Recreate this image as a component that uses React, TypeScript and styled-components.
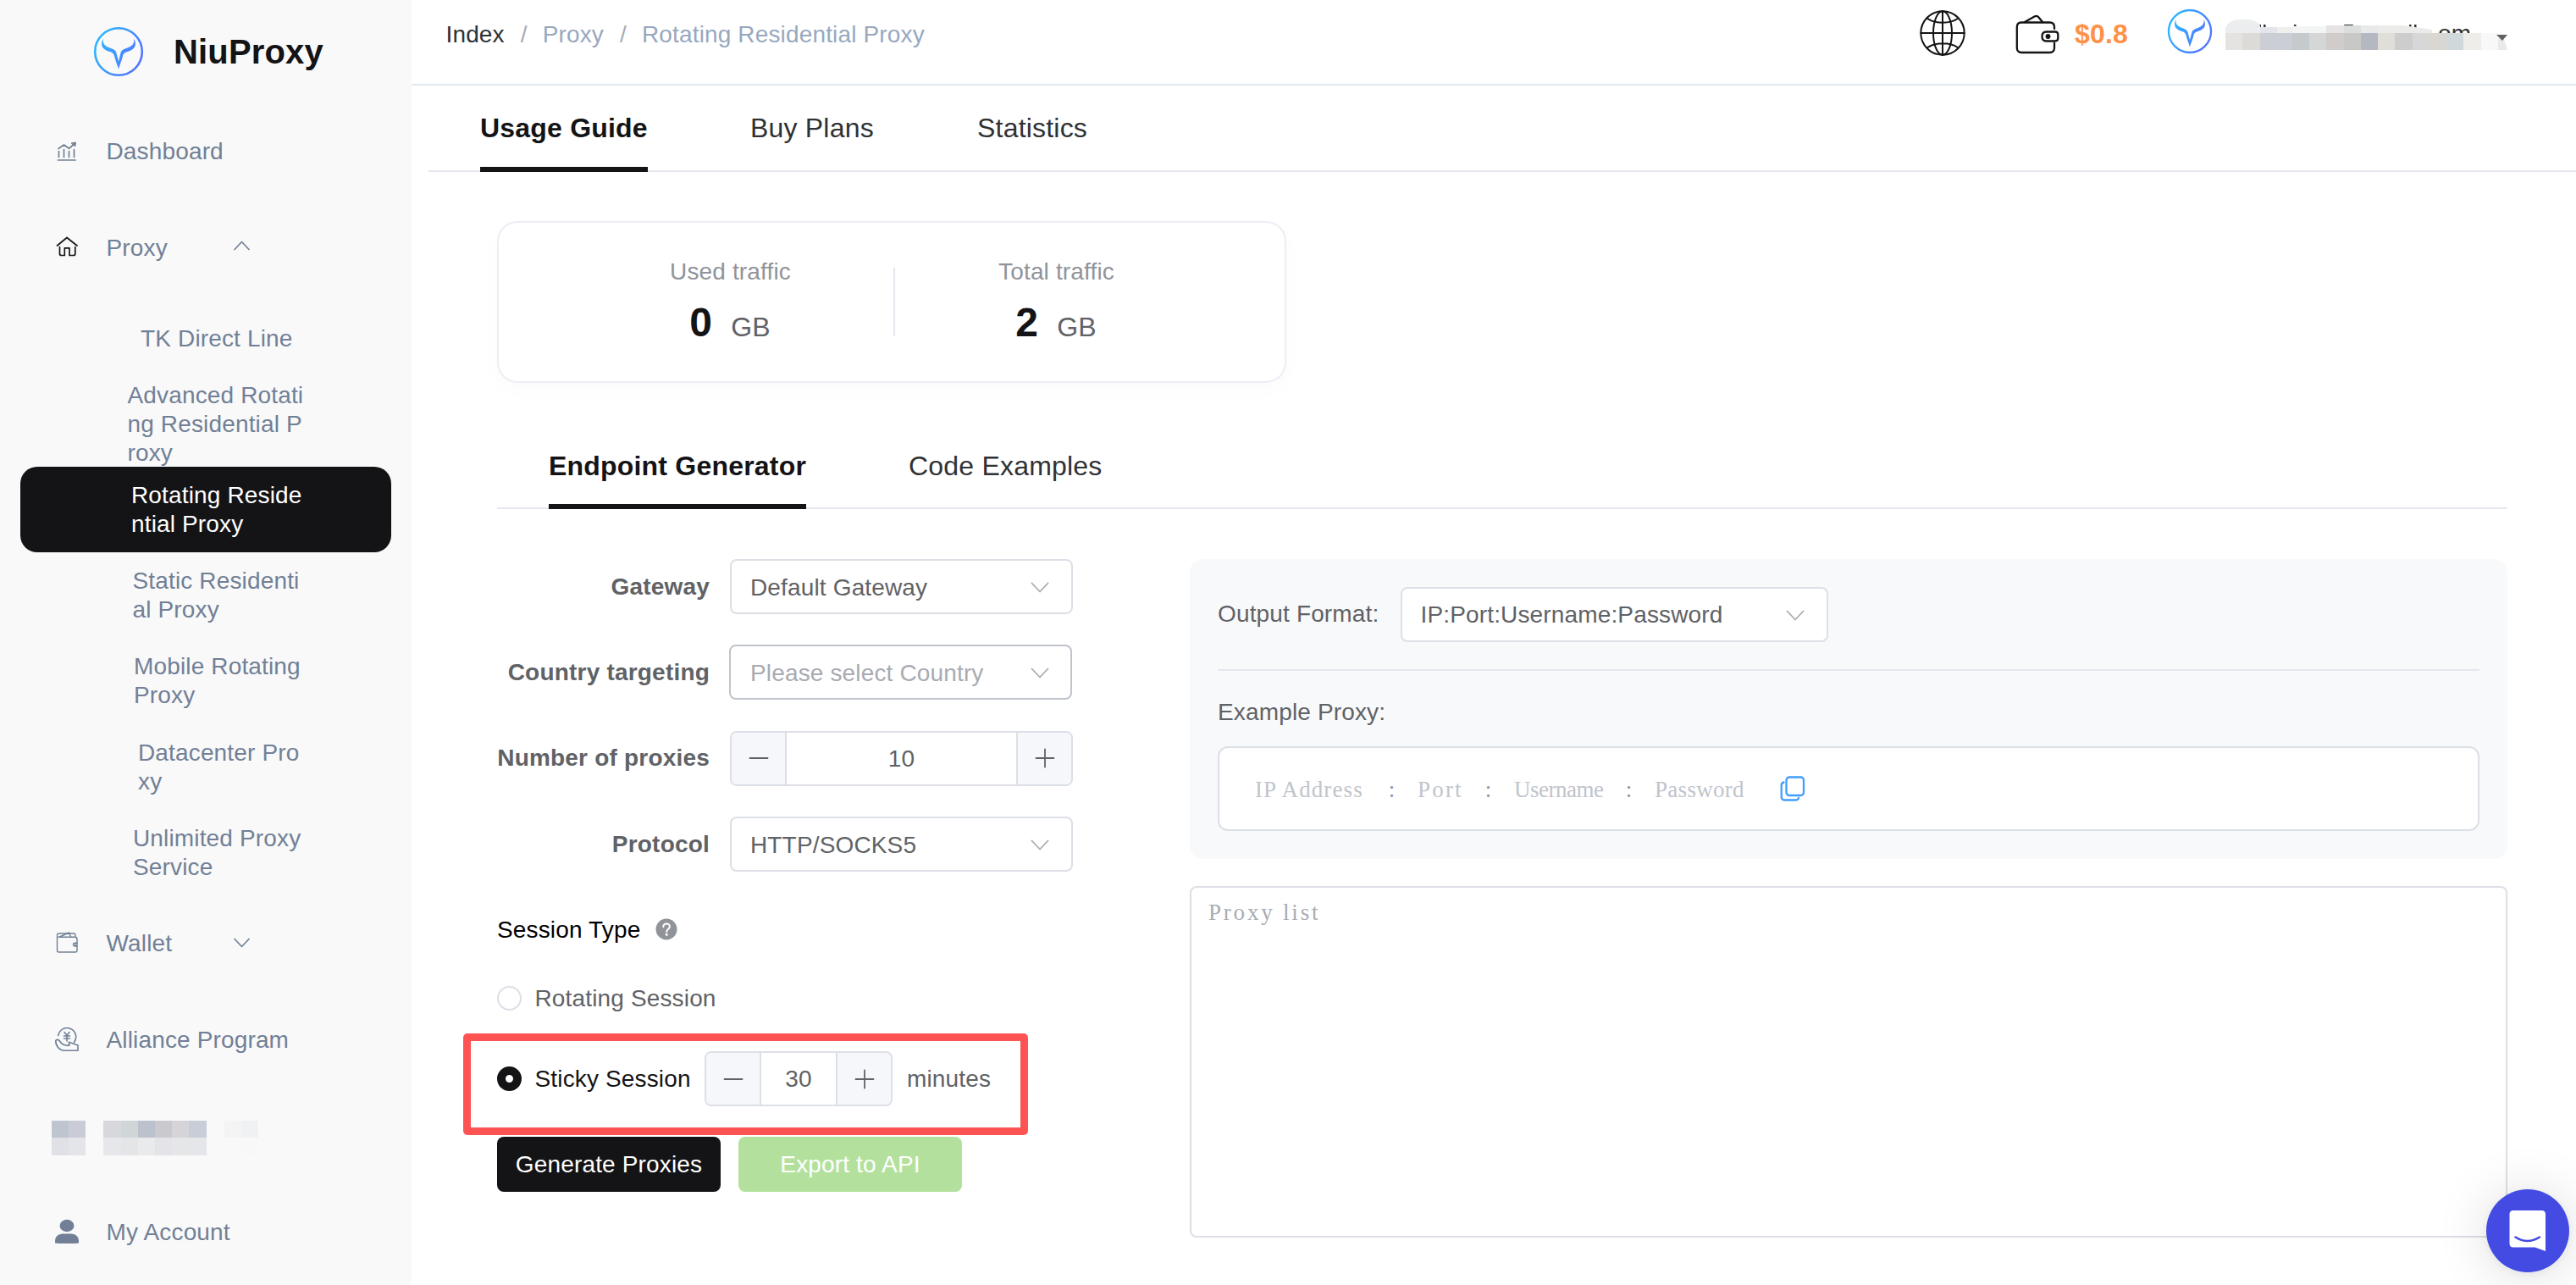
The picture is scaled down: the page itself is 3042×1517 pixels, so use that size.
import React from "react";
import styled, { createGlobalStyle, css } from "styled-components";

const GlobalStyle = createGlobalStyle`
  * { box-sizing: border-box; }
  body {
    margin: 0;
    background: #fff;
    font-family: "Liberation Sans", Arial, sans-serif;
    font-size: 28px;
    line-height: 34px;
    letter-spacing: 0.15px;
    color: #303133;
  }
`;

/* ---------- shell ---------- */

const Page = styled.div`
  display: flex;
  width: 3042px;
  height: 1517px;
  overflow: hidden;
  background: #fff;
`;

const Sidebar = styled.aside`
  flex: none;
  width: 486px;
  background: #f9f9f9;
`;

const Main = styled.main`
  flex: 1;
  min-width: 0;
  display: flex;
  flex-direction: column;
`;

/* ---------- sidebar ---------- */

const Brand = styled.div`
  display: flex;
  align-items: center;
  height: 121.5px;
  padding-left: 110px;
`;

const BrandName = styled.span`
  margin-left: 35px;
  font-size: 40px;
  line-height: 48px;
  font-weight: 700;
  color: #141416;
`;

const NavRow = styled.div`
  display: flex;
  align-items: center;
  height: 113.65px;
  padding-left: 64px;
  color: #718096;
`;

const NavIcon = styled.span`
  display: flex;
  width: 30px;
  height: 30px;
`;

const NavLabel = styled.span`
  margin-left: 31.5px;
  padding-top: 2px;
  width: 150px;
  white-space: nowrap;
`;

const NavArrow = styled.span`
  display: flex;
  margin-bottom: 3px;
`;

const SubList = styled.div`
  display: flex;
  flex-direction: column;
`;

const SubItem = styled.div<{ $indent: number; $active?: boolean }>`
  display: flex;
  flex-direction: column;
  justify-content: center;
  height: 101.1px;
  margin: 0 24px;
  padding-top: 1.5px;
  padding-left: ${(p) => p.$indent}px;
  border-radius: 20px;
  white-space: nowrap;
  color: #718096;
  ${(p) =>
    p.$active &&
    css`
      background: #141416;
      color: #fff;
    `}
`;

const MosaicRow = styled.div`
  display: flex;
  align-items: center;
  gap: 21px;
  height: 113.65px;
  padding: 5px 0 0 61px;
`;

const Mosaic = styled.div<{ $cols: number }>`
  display: grid;
  grid-template-columns: repeat(${(p) => p.$cols}, 20.2px);
  grid-auto-rows: 20.5px;
`;

const Cell = styled.i<{ $c: string }>`
  background: ${(p) => p.$c};
`;

/* ---------- header ---------- */

const Header = styled.header`
  display: flex;
  align-items: center;
  flex: none;
  height: 101px;
  padding: 0 78px 18px 40.5px;
  border-bottom: 2px solid #e2e8f0;
`;

const Crumb = styled.span<{ $current?: boolean }>`
  color: ${(p) => (p.$current ? "#303133" : "#97a8be")};
`;

const Slash = styled.span`
  margin: 0 18px 0 19px;
  color: #a8abb2;
`;

const HeaderRight = styled.div`
  display: flex;
  align-items: center;
  margin-left: auto;
`;

const GlobeBox = styled.span`
  display: flex;
  margin-bottom: 4px;
`;

const WalletBox = styled.span`
  display: flex;
  margin-left: 59px;
`;

const Balance = styled.span`
  width: 62px;
  margin: 0 47px 0 18px;
  font-size: 32px;
  line-height: 36px;
  padding-bottom: 2px;
  font-weight: 700;
  color: #ff9147;
`;

const Account = styled.div`
  display: flex;
  align-items: center;
  gap: 13px;
  margin-bottom: 8px;
`;

/* ---------- tabs ---------- */

const Tabs = styled.nav<{ $h: number }>`
  display: flex;
  flex: none;
  gap: 121px;
  height: ${(p) => p.$h}px;
  padding-left: 61px;
  box-shadow: inset 0 -2px 0 #e4e7ed;
`;

const PageTabs = styled(Tabs)`
  margin-left: 20px;
`;

const PanelTabs = styled(Tabs)`
  margin-top: 50px;
`;

const Tab = styled.div<{ $active?: boolean; $w: number }>`
  display: flex;
  align-items: center;
  width: ${(p) => p.$w}px;
  padding-top: 3px;
  border-bottom: 6px solid ${(p) => (p.$active ? "#141416" : "transparent")};
  font-size: 32px;
  letter-spacing: 0.2px;
  font-weight: ${(p) => (p.$active ? 700 : 400)};
  color: ${(p) => (p.$active ? "#141416" : "#303133")};
  white-space: nowrap;
`;

/* ---------- content ---------- */

const Content = styled.section`
  padding: 58px 81px 0 101px;
`;

const TrafficCard = styled.div`
  display: flex;
  width: 932px;
  height: 191px;
  padding-left: 83px;
  border: 2px solid #ebeef5;
  border-radius: 24px;
  box-shadow: 0 8px 24px rgba(0, 0, 0, 0.02);
`;

const Traffic = styled.div`
  display: flex;
  flex-direction: column;
  align-items: center;
  width: 383px;
  padding-top: 41px;
`;

const TrafficLabel = styled.div`
  margin-right: 2px;
  color: #909399;
`;

const TrafficValue = styled.div`
  display: flex;
  align-items: baseline;
  gap: 22px;
  margin: 15px 3px 0 0;
  font-size: 48px;
  line-height: 56px;
  font-weight: 700;
  color: #141416;
`;

const Unit = styled.span`
  font-size: 32px;
  font-weight: 400;
  color: #606266;
`;

const Divider = styled.div`
  width: 2px;
  height: 81px;
  margin-top: 53px;
  background: #e4e7ed;
`;

const Columns = styled.div`
  display: flex;
  gap: 138px;
  margin-top: 59px;
`;

const Form = styled.div`
  flex: none;
  width: 680px;
`;

const Fields = styled.div`
  display: flex;
  flex-direction: column;
  gap: 36.4px;
`;

const Field = styled.div`
  display: flex;
  align-items: center;
  height: 65px;
`;

const FieldLabel = styled.label`
  width: 251px;
  margin-right: 24px;
  text-align: right;
  font-weight: 700;
  letter-spacing: 0.2px;
  color: #606266;
  white-space: nowrap;
`;

const Select = styled.div<{ $w: number; $hover?: boolean; $empty?: boolean }>`
  display: flex;
  align-items: center;
  justify-content: space-between;
  width: ${(p) => p.$w}px;
  height: 65px;
  margin-left: ${(p) => (p.$hover ? -1 : 0)}px;
  padding: 2px ${(p) => (p.$hover ? 25 : 26)}px 0 ${(p) => (p.$hover ? 23 : 22)}px;
  border: 2px solid ${(p) => (p.$hover ? "#c0c4cc" : "#dcdfe6")};
  border-radius: 8px;
  background: #fff;
  color: ${(p) => (p.$empty ? "#a8abb2" : "#606266")};
  white-space: nowrap;
`;

const Stepper = styled.div<{ $w: number }>`
  display: flex;
  width: ${(p) => p.$w}px;
  height: 65px;
  border: 2px solid #dcdfe6;
  border-radius: 8px;
  overflow: hidden;
  color: #606266;
`;

const StepButton = styled.div<{ $side: "left" | "right" }>`
  display: flex;
  flex: none;
  align-items: center;
  justify-content: center;
  width: 65px;
  background: #f5f7fa;
  border-${(p) => (p.$side === "left" ? "right" : "left")}: 2px solid #dcdfe6;
`;

const StepValue = styled.div`
  flex: 1;
  display: flex;
  align-items: center;
  justify-content: center;
  padding-top: 1px;
`;

const SessionTitle = styled.div`
  display: flex;
  align-items: center;
  height: 40px;
  margin-top: 48px;
  color: #000;
`;

const SessionName = styled.span`
  width: 187px;
  padding-top: 1px;
`;

const RadioRow = styled.div`
  display: flex;
  align-items: center;
  height: 40px;
  margin-top: 41.5px;
  color: #606266;
`;

const StickyRow = styled(RadioRow)`
  position: relative;
  height: 65px;
  margin-top: 42.5px;
`;

const Radio = styled.span<{ $on?: boolean }>`
  flex: none;
  width: 29px;
  height: 29px;
  margin-right: 15.5px;
  border-radius: 50%;
  border: ${(p) => (p.$on ? "10.5px solid #141416" : "2px solid #dcdfe6")};
  background: #fff;
`;

const RadioLabel = styled.span<{ $on?: boolean }>`
  width: 200.5px;
  color: ${(p) => (p.$on ? "#141416" : "#606266")};
  white-space: nowrap;
`;

const Minutes = styled.span`
  margin-left: 17px;
`;

const Highlight = styled.div`
  position: absolute;
  left: -40px;
  top: -21.5px;
  width: 667px;
  height: 120px;
  border: 9px solid #fd5353;
  border-radius: 5px;
`;

const Actions = styled.div`
  display: flex;
  gap: 21px;
  margin-top: 36px;
`;

const Button = styled.div<{ $bg: string }>`
  display: flex;
  align-items: center;
  justify-content: center;
  width: 264px;
  height: 65px;
  padding-top: 1.5px;
  border-radius: 8px;
  background: ${(p) => p.$bg};
  color: #fff;
  white-space: nowrap;
`;

const Output = styled.div`
  flex: 1;
  min-width: 0;
`;

const OutputPanel = styled.div`
  height: 354px;
  padding: 33px;
  border-radius: 16px;
  background: #f8f9fb;
  color: #606266;
`;

const FormatRow = styled.div`
  display: flex;
  align-items: center;
  height: 64px;
`;

const FormatLabel = styled.span`
  width: 215.5px;
`;

const Rule = styled.div`
  height: 2px;
  margin: 33px 0 32px;
  background: #e4e7ed;
`;

const Example = styled.div`
  display: flex;
  align-items: center;
  height: 100px;
  margin-top: 23px;
  padding-left: 42px;
  border: 2px solid #dcdfe6;
  border-radius: 12px;
  background: #fff;
  font-family: "Liberation Serif", "Times New Roman", serif;
  font-size: 27px;
`;

const Part = styled.span<{ $w: number; $track: number }>`
  width: ${(p) => p.$w}px;
  padding-top: 2px;
  letter-spacing: ${(p) => p.$track}px;
  color: #c0c4cc;
  white-space: nowrap;
`;

const Colon = styled.span`
  width: 62px;
  padding: 2px 0 0 1px;
  text-align: center;
  color: #909399;
`;

const CopyBox = styled.span`
  display: flex;
  margin-left: 44px;
`;

const ProxyList = styled.div`
  height: 415px;
  margin-top: 32px;
  padding: 12px 20px;
  border: 2px solid #dcdfe6;
  border-radius: 8px;
  font-family: "Liberation Serif", "Times New Roman", serif;
  font-size: 27px;
  letter-spacing: 2.8px;
  color: #a8abb2;
`;

const Chat = styled.div`
  position: fixed;
  left: 2936px;
  top: 1404px;
  display: flex;
  align-items: center;
  justify-content: center;
  width: 98px;
  height: 98px;
  border-radius: 50%;
  background: #444be3;
  box-shadow: 0 2px 12px rgba(0, 0, 0, 0.06), 0 4px 64px rgba(0, 0, 0, 0.14);
`;

/* ---------- drawings ---------- */

const Logo = ({ size, id }: { size: number; id: string }) => (
  <svg width={size} height={size} viewBox="-30 -30 60 60" fill="none">
    <defs>
      <linearGradient id={id} gradientUnits="userSpaceOnUse" x1="-27" y1="-12" x2="27" y2="14">
        <stop offset="0" stopColor="#2db7ff" />
        <stop offset="1" stopColor="#5470ff" />
      </linearGradient>
    </defs>
    <circle r="27.8" stroke={`url(#${id})`} strokeWidth="2.6" />
    <path
      fill={`url(#${id})`}
      d="M-18.3 -15.5C-22 -8 -19.5 -2.5 -10.5 0C-7 1 -5.6 2.5 -5 5C-4 10 -1.6 15 0 20.5C1.6 15 4 10 5 5C5.6 2.5 7 1 10.5 0C19.5 -2.5 22 -8 18.3 -15.5C18.8 -9.5 16.5 -6.8 10.5 -4.5C5.5 -2.8 3.2 -1.8 2.3 2.5L0 11.5L-2.3 2.5C-3.2 -1.8 -5.5 -2.8 -10.5 -4.5C-16.5 -6.8 -18.8 -9.5 -18.3 -15.5Z"
    />
  </svg>
);

const line = (w: number) => ({
  fill: "none",
  stroke: "currentColor",
  strokeWidth: w,
  strokeLinecap: "round" as const,
  strokeLinejoin: "round" as const,
});

const ChartIcon = () => (
  <svg width="30" height="30" {...line(1.7)}>
    <path d="M4.5 26H25M5.5 15.5V22.5M11.5 13.5V22.5M17.5 15.5V22.5M23.5 13.5V22.5" />
    <path d="M5 12.5L11.5 8L17.5 12.3L23.5 7" />
    <path d="M20.500 6L25.5 5L24.8 9.500Z" fill="currentColor" strokeWidth="1" />
  </svg>
);

const HomeIcon = () => (
  <svg width="30" height="30" color="#141416" {...line(1.7)}>
    <path d="M3.5 13L15 3.5L27 13" />
    <path d="M6.5 14.5V22.5Q6.5 24.5 8.5 24.5H12.3V15.8H18V24.5H22.8Q24.8 24.5 24.8 22.5V14.5" />
  </svg>
);

const NavWalletIcon = () => (
  <svg width="30" height="30" {...line(1.4)}>
    <path d="M5 8.300H24.500Q27 8.300 27 10.500V24Q27 26 25 26H5.500Q3.500 26 3.500 24V6Q3.500 4 5.500 4H23.500Q25 4 25 6V8.300" />
    <path d="M6.500 8L17.500 3L19.500 8M27 15.200H24.500Q22.500 15.200 22.500 17Q22.500 19 24.500 19H27M25 16V18" />
  </svg>
);

const AllianceIcon = () => (
  <svg width="30" height="30" {...line(1.6)}>
    <path d="M4.800 10.500A10.500 10.500 0 1 1 23.500 18.500" />
    <path d="M12 6.500L15 10.300L18 6.500M15 10.300V17M11.500 11H18.500M11.500 14H18.500" />
    <path d="M1.800 16.500C3 14.600 5.500 15.300 6.500 17C8.500 20.500 12 22.600 17.800 22.300C18.200 20 16.500 19 17.500 18.200L28 22V28.300H12C6 28 1.500 22.500 1.800 16.500Z" />
  </svg>
);

const UserIcon = () => (
  <svg width="30" height="30" fill="currentColor">
    <ellipse cx="15" cy="8" rx="8.500" ry="7.200" />
    <path d="M1 28.500V26C1 21 5 17.500 10 17.500H20C25 17.500 29 21 29 26V28.500Q26 29 15 29Q4 29 1 28.500Z" />
  </svg>
);

const Arrow = ({ up }: { up?: boolean }) => (
  <svg width="19" height="12" {...line(1.7)}>
    <path d={up ? "M1 10.500L9.500 1.500L18 10.500" : "M1 1.500L9.500 10.500L18 1.500"} />
  </svg>
);

const SelectArrow = () => (
  <svg width="22" height="13" {...line(1.8)} stroke="#a8abb2">
    <path d="M1.500 1.500L11 11.500L20.500 1.500" />
  </svg>
);

const Minus = () => (
  <svg width="24" height="24" {...line(1.8)}>
    <path d="M1.500 12H22.500" />
  </svg>
);

const Plus = () => (
  <svg width="24" height="24" {...line(1.8)}>
    <path d="M1.500 12H22.500M12 1.500V22.500" />
  </svg>
);

const Globe = () => (
  <svg width="54" height="54" viewBox="-27 -27 54 54" color="#141416" {...line(2)}>
    <circle r="25.700" />
    <ellipse rx="11" ry="25.700" />
    <path d="M0 -25.700V25.700M-25.700 0H25.700M-18.500 -17.500C-9 -10.500 9 -10.500 18.500 -17.500M-18.500 17.500C-9 10.500 9 10.500 18.500 17.500" />
  </svg>
);

const HeaderWallet = () => (
  <svg width="52" height="48" color="#141416" {...line(2.3)}>
    <path d="M46 17V15Q46 9.500 40.500 9.500H7Q1.800 9.500 1.800 15V39.500Q1.800 45 7.300 45H40.500Q46 45 46 39.500V34" />
    <path d="M11 9L22.500 2.500Q25.500 1 27.500 3.500L32 9" />
    <path d="M36.500 20.500H47Q50.300 20.500 50.300 24V28Q50.300 31.500 47 31.500H36.500Q31.500 31.500 31.500 26Q31.500 20.500 36.500 20.500Z" />
    <circle cx="38.500" cy="26" r="1.800" fill="currentColor" />
  </svg>
);

const Question = () => (
  <svg width="26" height="26" viewBox="0 0 26 26">
    <circle cx="13" cy="13" r="12.500" fill="#909399" />
    <path d="M9.300 10.300C9.300 5.200 16.900 5.300 16.900 10C16.900 12.800 13.200 12.800 13.200 16" fill="none" stroke="#fff" strokeWidth="2" strokeLinecap="round" />
    <circle cx="13.200" cy="19.300" r="1.500" fill="#fff" />
  </svg>
);

const Copy = () => (
  <svg width="30" height="30" fill="none" stroke="#409eff" strokeWidth="2.3">
    <rect x="7.500" y="1.500" width="20.500" height="21.500" rx="3.500" />
    <path d="M4.500 7.500Q1.700 8 1.700 11.500V24.500Q1.700 28.500 5.500 28.500H18Q21.500 28.500 22 26" strokeLinecap="round" />
  </svg>
);

const ChatGlyph = () => (
  <svg width="44" height="50" viewBox="0 0 44 50">
    <path d="M5 1H38.500Q43 1 43 5.500V49L30.500 44.500H5Q0.500 44.500 0.500 40V5.500Q0.500 1 5 1Z" fill="#fff" />
    <path d="M7.500 32.500Q21.500 41.500 36 32.500" fill="none" stroke="#444be3" strokeWidth="2.600" strokeLinecap="round" />
  </svg>
);

const maskedCells: [number, number, string][] = [
  [2, 20, "#e4e3e2"], [22, 21, "#dddbd8"], [43, 38, "#cbced4"], [81, 20, "#c5cacd"],
  [101, 20, "#d5d7d6"], [121, 21, "#d1ccca"], [142, 20, "#c8c9c6"], [162, 20, "#b3b8c1"],
  [182, 20, "#dfded9"], [202, 21, "#cdcdce"], [223, 19, "#d7d7d8"], [242, 21, "#dad7d3"],
  [263, 20, "#d1d8dc"], [283, 21, "#efede9"], [304, 20, "#f8f8f8"],
];

const MaskedAccount = () => (
  <svg width="338" height="60" viewBox="0 0 338 60">
    <g fill="#303133">
      <rect x="41" y="22" width="3" height="4" />
      <rect x="47" y="22" width="2.500" height="4" />
      <rect x="83" y="22" width="2.500" height="4" />
      <rect x="142" y="22" width="11" height="2" rx="1" />
      <rect x="219" y="22" width="2.500" height="4" />
      <rect x="225" y="22" width="2.500" height="5" />
    </g>
    <text x="253" y="42" fontSize="28" fontFamily="Liberation Sans, Arial, sans-serif" fill="#303133">om</text>
    <path d="M2 32V25Q8 16 18 16H30Q38 17 43 23V32Z" fill="#ecedee" />
    <rect x="43" y="25" width="20" height="7" fill="#e2e6ea" />
    <rect x="63" y="25" width="18" height="7" fill="#efefee" />
    <rect x="81" y="24" width="40" height="8" fill="#f3f4f4" />
    <rect x="121" y="23" width="21" height="9" fill="#e5e4e3" />
    <rect x="142" y="23" width="20" height="9" fill="#dcdddd" />
    <rect x="162" y="23" width="20" height="9" fill="#e8eaea" />
    <path d="M182 23H212L246 28V32H182Z" fill="#ebebea" />
    {maskedCells.map(([x, w, c]) => (
      <rect key={x} x={x} y="32" width={w} height="20" fill={c} />
    ))}
    <path d="M324 38L331 39L335 52H324Z" fill="#e9e9e9" />
    <path d="M322 34H335L329 41Z" fill="#606266" />
  </svg>
);

/* ---------- data ---------- */

const proxyItems: { lines: string[]; indent: number; active?: boolean }[] = [
  { lines: ["TK Direct Line"], indent: 142 },
  { lines: ["Advanced Rotati", "ng Residential P", "roxy"], indent: 126.5 },
  { lines: ["Rotating Reside", "ntial Proxy"], indent: 131, active: true },
  { lines: ["Static Residenti", "al Proxy"], indent: 132.5 },
  { lines: ["Mobile Rotating", "Proxy"], indent: 134 },
  { lines: ["Datacenter Pro", "xy"], indent: 139 },
  { lines: ["Unlimited Proxy", "Service"], indent: 133 },
];

const mosaics = [
  ["#bfc5cf", "#c9ccd7", "#dfe1e7", "#e4e5e9"],
  ["#d7d8dc", "#d0d5d8", "#bcc1ce", "#cacace", "#d5d5d9", "#c8ced8", "#e6e7eb", "#e4e5e7", "#e9eaeb", "#e4e3e7", "#e5e6e8", "#e5e6ea"],
  ["#f4f4f4", "#f0f1f3", "#f9f9f9", "#f8f8f9"],
];

export default function App() {
  return (
    <Page>
      <GlobalStyle />
      <Sidebar>
        <Brand>
          <Logo size={60} id="brand" />
          <BrandName>NiuProxy</BrandName>
        </Brand>
        <NavRow>
          <NavIcon><ChartIcon /></NavIcon>
          <NavLabel>Dashboard</NavLabel>
        </NavRow>
        <NavRow>
          <NavIcon><HomeIcon /></NavIcon>
          <NavLabel>Proxy</NavLabel>
          <NavArrow><Arrow up /></NavArrow>
        </NavRow>
        <SubList>
          {proxyItems.map((item) => (
            <SubItem key={item.lines[0]} $indent={item.indent} $active={item.active}>
              {item.lines.map((l) => (
                <span key={l}>{l}</span>
              ))}
            </SubItem>
          ))}
        </SubList>
        <NavRow>
          <NavIcon><NavWalletIcon /></NavIcon>
          <NavLabel>Wallet</NavLabel>
          <Arrow />
        </NavRow>
        <NavRow>
          <NavIcon><AllianceIcon /></NavIcon>
          <NavLabel>Alliance Program</NavLabel>
        </NavRow>
        <MosaicRow>
          {mosaics.map((cells, i) => (
            <Mosaic key={i} $cols={cells.length / 2}>
              {cells.map((c, j) => (
                <Cell key={j} $c={c} />
              ))}
            </Mosaic>
          ))}
        </MosaicRow>
        <NavRow>
          <NavIcon><UserIcon /></NavIcon>
          <NavLabel>My Account</NavLabel>
        </NavRow>
      </Sidebar>

      <Main>
        <Header>
          <Crumb $current>Index</Crumb>
          <Slash>/</Slash>
          <Crumb>Proxy</Crumb>
          <Slash>/</Slash>
          <Crumb>Rotating Residential Proxy</Crumb>
          <HeaderRight>
            <GlobeBox><Globe /></GlobeBox>
            <WalletBox><HeaderWallet /></WalletBox>
            <Balance>$0.8</Balance>
            <Account>
              <Logo size={54} id="avatar" />
              <MaskedAccount />
            </Account>
          </HeaderRight>
        </Header>

        <PageTabs $h={102}>
          <Tab $active $w={198}>Usage Guide</Tab>
          <Tab $w={147}>Buy Plans</Tab>
          <Tab $w={132}>Statistics</Tab>
        </PageTabs>

        <Content>
          <TrafficCard>
            <Traffic>
              <TrafficLabel>Used traffic</TrafficLabel>
              <TrafficValue>0<Unit>GB</Unit></TrafficValue>
            </Traffic>
            <Divider />
            <Traffic>
              <TrafficLabel>Total traffic</TrafficLabel>
              <TrafficValue>2<Unit>GB</Unit></TrafficValue>
            </Traffic>
          </TrafficCard>

          <PanelTabs $h={99}>
            <Tab $active $w={304}>Endpoint Generator</Tab>
            <Tab $w={230}>Code Examples</Tab>
          </PanelTabs>

          <Columns>
            <Form>
              <Fields>
                <Field>
                  <FieldLabel>Gateway</FieldLabel>
                  <Select $w={405}>Default Gateway<SelectArrow /></Select>
                </Field>
                <Field>
                  <FieldLabel>Country targeting</FieldLabel>
                  <Select $w={405} $hover $empty>Please select Country<SelectArrow /></Select>
                </Field>
                <Field>
                  <FieldLabel>Number of proxies</FieldLabel>
                  <Stepper $w={405}>
                    <StepButton $side="left"><Minus /></StepButton>
                    <StepValue>10</StepValue>
                    <StepButton $side="right"><Plus /></StepButton>
                  </Stepper>
                </Field>
                <Field>
                  <FieldLabel>Protocol</FieldLabel>
                  <Select $w={405}>HTTP/SOCKS5<SelectArrow /></Select>
                </Field>
              </Fields>

              <SessionTitle>
                <SessionName>Session Type</SessionName>
                <Question />
              </SessionTitle>
              <RadioRow>
                <Radio />
                <RadioLabel>Rotating Session</RadioLabel>
              </RadioRow>
              <StickyRow>
                <Radio $on />
                <RadioLabel $on>Sticky Session</RadioLabel>
                <Stepper $w={222}>
                  <StepButton $side="left"><Minus /></StepButton>
                  <StepValue>30</StepValue>
                  <StepButton $side="right"><Plus /></StepButton>
                </Stepper>
                <Minutes>minutes</Minutes>
                <Highlight />
              </StickyRow>
              <Actions>
                <Button $bg="#141416">Generate Proxies</Button>
                <Button $bg="#b3e19d">Export to API</Button>
              </Actions>
            </Form>

            <Output>
              <OutputPanel>
                <FormatRow>
                  <FormatLabel>Output Format:</FormatLabel>
                  <Select $w={505.5}>IP:Port:Username:Password<SelectArrow /></Select>
                </FormatRow>
                <Rule />
                <div>Example Proxy:</div>
                <Example>
                  <Part $w={130} $track={1.1}>IP Address</Part>
                  <Colon>:</Colon>
                  <Part $w={52} $track={2.2}>Port</Part>
                  <Colon>:</Colon>
                  <Part $w={104} $track={-0.5}>Username</Part>
                  <Colon>:</Colon>
                  <Part $w={104} $track={0.3}>Password</Part>
                  <CopyBox><Copy /></CopyBox>
                </Example>
              </OutputPanel>
              <ProxyList>Proxy list</ProxyList>
            </Output>
          </Columns>
        </Content>
      </Main>

      <Chat><ChatGlyph /></Chat>
    </Page>
  );
}
